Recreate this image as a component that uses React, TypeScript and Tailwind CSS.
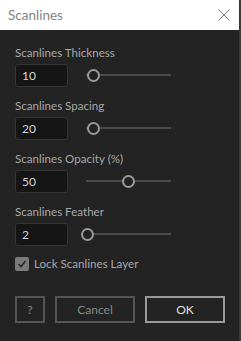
import React from "react";

const font = { fontFamily: 'Lato, "Noto Sans", sans-serif' };

function Slider({ thumb }: { thumb: number }) {
  return (
    <div className="relative ml-[18px] h-[23px] w-[85px]">
      <div className="absolute left-0 right-0 top-[10px] h-[2px] bg-[#4a4a4a]" />
      <div
        className="absolute top-[5px] h-[13px] w-[13px] rounded-full border-2 border-[#9a9a9a] bg-[#222222]"
        style={{ left: thumb }}
      />
    </div>
  );
}

function Field({ label, value, thumb }: { label: string; value: string; thumb: number }) {
  return (
    <div className="flex flex-col">
      <div className="h-4 text-[11.6px] leading-4 text-[#a8a8a8]">{label}</div>
      <div className="mt-[3px] flex items-center">
        <div className="flex h-[23px] w-[53px] items-center rounded-[3px] border border-[#353535] bg-[#151515] pl-[6px] text-[12px] text-[#d4d4d4]">
          {value}
        </div>
        <Slider thumb={thumb} />
      </div>
    </div>
  );
}

export default function App() {
  return (
    <div className="h-[341px] w-[241px] bg-[#232323] border-r-2 border-[#3a3a3a] flex flex-col" style={font}>
      <div className="flex h-[30px] items-center justify-between bg-white pl-[8px] pr-[9px]">
        <span className="text-[13.5px] text-[#858585]">Scanlines</span>
        <svg width="12" height="12" viewBox="0 0 12 12">
          <path d="M0.5 0.5 L11.5 11.5 M11.5 0.5 L0.5 11.5" stroke="#7a7a7a" strokeWidth="1" />
        </svg>
      </div>
      <div className="flex flex-col pl-[15px] pt-[15px]">
        <div className="flex flex-col gap-[11px]">
          <Field label="Scanlines Thickness" value="10" thumb={1} />
          <Field label="Scanlines Spacing" value="20" thumb={1} />
          <Field label="Scanlines Opacity (%)" value="50" thumb={36} />
          <Field label="Scanlines Feather" value="2" thumb={-5} />
        </div>
        <div className="mt-[10px] flex h-4 items-center gap-[5px]">
          <div className="flex h-[14px] w-[14px] items-center justify-center rounded-[2px] bg-[#7a7a7a]">
            <svg width="10" height="10" viewBox="0 0 10 10">
              <path d="M1.5 5 L4 7.5 L8.5 2" fill="none" stroke="#2a2a2a" strokeWidth="1.6" />
            </svg>
          </div>
          <span className="text-[11.6px] leading-4 text-[#a8a8a8]">Lock Scanlines Layer</span>
        </div>
        <div className="mt-[24px] flex items-center">
          <button className="flex h-[27px] w-[30px] items-center justify-center border-2 border-[#555555] text-[12px] text-[#8a8a8a]">
            ?
          </button>
          <button className="ml-[10px] flex h-[27px] w-[80px] items-center justify-center border-2 border-[#555555] text-[12px] text-[#8a8a8a]">
            Cancel
          </button>
          <button className="ml-[10px] flex h-[27px] w-[80px] items-center justify-center border-2 border-[#9a9a9a] text-[12px] text-[#e0e0e0]">
            OK
          </button>
        </div>
      </div>
    </div>
  );
}
